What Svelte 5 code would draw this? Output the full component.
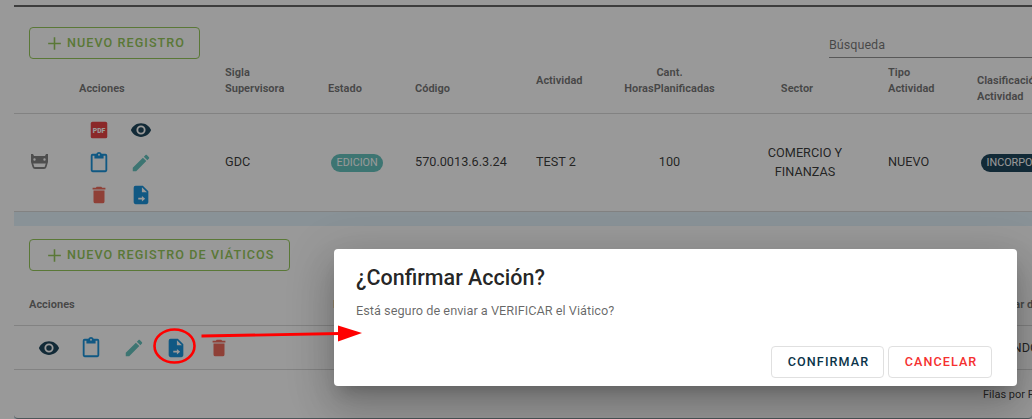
<script>
  const paths = {
    eye: 'M12,9A3,3 0 0,0 9,12A3,3 0 0,0 12,15A3,3 0 0,0 15,12A3,3 0 0,0 12,9M12,17A5,5 0 0,1 7,12A5,5 0 0,1 12,7A5,5 0 0,1 17,12A5,5 0 0,1 12,17M12,4.5C7,4.5 2.73,7.61 1,12C2.73,16.39 7,19.5 12,19.5C17,19.5 21.27,16.39 23,12C21.27,7.61 17,4.5 12,4.5Z',
    paste: 'M19,20H5V4H7V7H17V4H19M12,2A1,1 0 0,1 13,3A1,1 0 0,1 12,4A1,1 0 0,1 11,3A1,1 0 0,1 12,2M19,2H14.82C14.4,0.84 13.3,0 12,0C10.7,0 9.6,0.84 9.18,2H5A2,2 0 0,0 3,4V20A2,2 0 0,0 5,22H19A2,2 0 0,0 21,20V4A2,2 0 0,0 19,2Z',
    pencil: 'M20.71,7.04C21.1,6.65 21.1,6 20.71,5.63L18.37,3.29C18,2.9 17.35,2.9 16.96,3.29L15.12,5.12L18.87,8.87M3,17.25V21H6.75L17.81,9.93L14.06,6.18L3,17.25Z',
    trash: 'M19,4H15.5L14.5,3H9.5L8.5,4H5V6H19M6,19A2,2 0 0,0 8,21H16A2,2 0 0,0 18,19V7H6V19Z',
    move: 'M14,2H6A2,2 0 0,0 4,4V20A2,2 0 0,0 6,22H18A2,2 0 0,0 20,20V8L14,2M13,3.5L18.5,9H13V3.5M13,19V17H9V15H13V13L16.5,16L13,19Z',
    plus: 'M20,13H13V20H11V13H4V11H11V4H13V11H20V13Z'
  };
  const colors = { eye: '#06324a', paste: '#0288d6', pencil: '#55bcb7', trash: '#ec5c4b', move: '#0288d6', plus: '#8bc34a' };
  const first = ['pdf', 'eye', 'paste', 'pencil', 'trash', 'move'];
  const second = ['eye', 'paste', 'pencil', 'move', 'trash'];
</script>

{#snippet icon(name)}
  <svg class="icon" viewBox="0 0 24 24">
    {#if name === 'pdf'}
      <rect x="3" y="3" width="18" height="18" rx="2" fill="#e52f30" />
      <text x="5.3" y="14.8" class="pdf" textLength="13.6" lengthAdjust="spacingAndGlyphs">PDF</text>
    {:else}
      <path d={paths[name]} fill={colors[name]} />
    {/if}
  </svg>
{/snippet}

<div class="page">
  <section class="panel top">
    <div class="toolbar">
      <button class="add">{@render icon('plus')}<span>NUEVO REGISTRO</span></button>
      <div class="search">Búsqueda</div>
    </div>
    <div class="grid head">
      <span></span>
      <span>Acciones</span>
      <span class="up">Sigla<br />Supervisora</span>
      <span>Estado</span>
      <span>Código</span>
      <span class="act">Actividad</span>
      <span class="up center">Cant.<br />HorasPlanificadas</span>
      <span class="center sec">Sector</span>
      <span class="up">Tipo<br />Actividad</span>
      <span class="clas">Clasificación<br />Actividad</span>
    </div>
    <div class="grid row">
      <span class="carcell">
        <svg class="car" viewBox="0 0 17 15">
          <path d="M0 0H2L3 2H14L15 0H17V8L15.5 13Q15 15 13 15H4Q2 15 1.5 13L0 8ZM2.2 9.5L3.4 13H13.6L14.8 9.5ZM3.5 4.3A1.2 1.2 0 1 0 3.5 6.7A1.2 1.2 0 1 0 3.5 4.3M13.5 4.3A1.2 1.2 0 1 0 13.5 6.7A1.2 1.2 0 1 0 13.5 4.3" fill="#757575" fill-rule="evenodd" />
        </svg>
      </span>
      <div class="icons six">
        {#each first as name}{@render icon(name)}{/each}
      </div>
      <span>GDC</span>
      <span><b class="chip teal">EDICION</b></span>
      <span>570.0013.6.3.24</span>
      <span>TEST 2</span>
      <span class="center">100</span>
      <span class="center sector">COMERCIO Y<br />FINANZAS</span>
      <span>NUEVO</span>
      <span><b class="chip navy">INCORPORADA</b></span>
    </div>
  </section>

  <section class="panel bottom">
    <div class="toolbar second">
      <button class="add">{@render icon('plus')}<span>NUEVO REGISTRO DE VIÁTICOS</span></button>
    </div>
    <div class="head2"><span>Acciones</span><span>I</span><span>Lugar de</span></div>
    <div class="row2">
      <div class="icons five">
        {#each second as name}{@render icon(name)}{/each}
      </div>
      <span class="place">FERNANDO</span>
    </div>
    <div class="foot"><span>Filas por Página</span></div>
  </section>
</div>

<div class="overlay"></div>

<div class="dialog">
  <h2>¿Confirmar Acción?</h2>
  <p>Está seguro de enviar a VERIFICAR el Viático?</p>
  <div class="buttons">
    <button class="confirm">CONFIRMAR</button>
    <button class="cancel">CANCELAR</button>
  </div>
</div>

<svg class="marks" viewBox="0 0 1032 419">
  <ellipse cx="174.5" cy="346" rx="20" ry="16.5" fill="none" stroke="#f00" stroke-width="2.6" />
  <path d="M201.5 336L340 333.5" stroke="#f00" stroke-width="2.8" />
  <path d="M338 325.5L362 333L338 341.5Z" fill="#f00" />
</svg>

<style>
  :global(body) { margin: 0; overflow: hidden; }
  .page { width: 1032px; height: 419px; box-sizing: border-box; padding: 5px 0 0 14px; overflow: hidden; background: #fff; font-family: Roboto, sans-serif; color: rgba(0, 0, 0, .87); position: relative; white-space: nowrap; }
  .panel { background: #fff; }
  .top { height: 207px; border-top: 2px solid #555; box-sizing: border-box; border-bottom: 1px solid #d4d4d4; }
  .bottom { margin-top: 14px; height: 192px; border-bottom: 1px solid #74848a; box-shadow: 0 -14px 0 #e1f2fb, 0 4px 0 #e1f2fb; border-radius: 0 0 4px 4px; }
  .toolbar { height: 52px; padding: 20px 0 0 15px; box-sizing: border-box; display: flex; justify-content: space-between; }
  .add { display: flex; align-items: center; height: 32px; box-sizing: border-box; padding: 0 14px 0 15px; border: 1px solid #8bc34a; border-radius: 4px; background: none; color: #8bc34a; font: 500 12.6px Roboto, sans-serif; letter-spacing: 1.06px; }
  .add .icon { width: 19px; height: 19px; margin-right: 3px; }
  .add span { margin-top: -1px; }
  .search { width: 203px; height: 31px; border-bottom: 1px solid #888; box-sizing: border-box; font-size: 12.6px; line-height: 36px; color: rgba(0, 0, 0, .6); }
  .icon { display: block; width: 22px; height: 22px; }
  .pdf { font: 900 7.4px Roboto, sans-serif; fill: #fff; }
  .grid { display: grid; grid-template-columns: 65px 146px 103px 87px 121px 88px 91px 173px 89px 90px; }
  .head { height: 54px; font-size: 11px; font-weight: 700; color: rgba(0, 0, 0, .6); line-height: 16px; align-items: start; border-bottom: 1px solid #d4d4d4; }
  .head span { margin-top: 22px; }
  .head .up { margin-top: 6px; }
  .head .act, .head .clas { margin-top: 14px; }
  .head .sec { padding-right: 9px; }
  .row { height: 97px; align-items: center; font-size: 12.7px; line-height: 19px; }
  .row > span { position: relative; top: -1px; }
  .center { text-align: center; }
  .row .sector { padding: 0 9px 0 16px; }
  .carcell { padding-left: 17px; }
  .car { display: block; width: 17px; height: 15px; }
  .icons { display: grid; }
  .six { grid-template-columns: 42.5px 42.5px; grid-auto-rows: 32.5px; justify-items: center; align-items: center; margin-left: -1.5px; }
  .five { display: flex; gap: 20.6px; }
  .chip { display: inline-block; height: 18px; line-height: 17px; border-radius: 9px; padding: 0 5.5px; margin-left: 3px; color: #fff; font-weight: 400; font-size: 10.8px; vertical-align: middle; }
  .teal { background: #55bcb7; }
  .navy { background: #06324a; margin-left: 4px; }
  .second { height: 57px; padding-top: 13px; }
  .head2 { height: 42px; border-bottom: 1px solid #d4d4d4; display: grid; grid-template-columns: 304px 663px 1fr; padding-left: 15px; font: 700 11px/44px Roboto, sans-serif; color: rgba(0, 0, 0, .6); }
  .row2 { height: 43px; border-bottom: 1px solid #d4d4d4; display: flex; align-items: center; padding-left: 23.5px; font-size: 12.75px; }
  .place { margin-left: 743px; }
  .foot { padding-left: 969px; font-size: 11px; line-height: 49px; }
  .overlay { position: absolute; inset: 0; width: 1032px; height: 419px; background: #212121; opacity: .46; }
  .dialog { position: absolute; left: 334px; top: 249px; width: 683px; height: 137px; box-sizing: border-box; padding: 14px 25px 0 22px; background: #fff; border-radius: 4px; font-family: Roboto, sans-serif; box-shadow: 0 11px 15px -7px rgba(0,0,0,.2), 0 24px 38px 3px rgba(0,0,0,.14), 0 9px 46px 8px rgba(0,0,0,.12); }
  h2 { margin: 0; font-size: 21.5px; line-height: 29px; font-weight: 500; color: rgba(0, 0, 0, .87); }
  p { margin: 9px 0 0; font-size: 12.75px; line-height: 20px; color: rgba(0, 0, 0, .6); }
  .buttons { display: flex; justify-content: flex-end; gap: 4px; margin-top: 25px; }
  .buttons button { height: 32px; box-sizing: border-box; border: 1px solid #e0e0e0; border-radius: 4px; padding: 0 0 2px 2px; background: #fff; font: 500 12.6px Roboto, sans-serif; letter-spacing: 1.08px; }
  .confirm { width: 113px; color: #0b3449; }
  .buttons .cancel { width: 104px; color: #f5302f; }
  .marks { position: absolute; left: 0; top: 0; width: 1032px; height: 419px; }
</style>
